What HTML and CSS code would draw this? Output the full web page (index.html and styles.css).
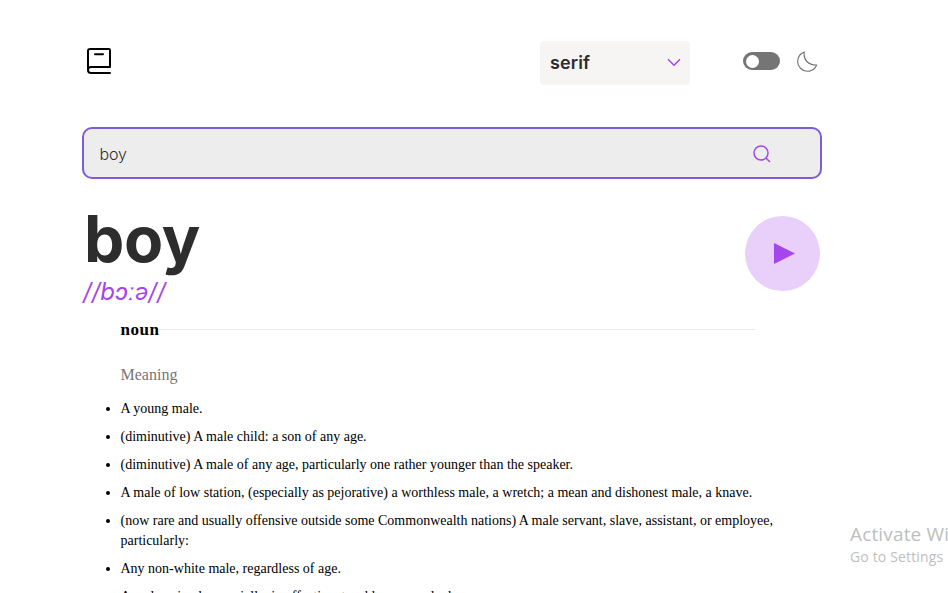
FILE: index.html
```html
<!DOCTYPE html>
<html lang="en">
<head>
<meta charset="utf-8">
<title>Dictionary</title>
<link rel="stylesheet" href="styles.css">
</head>
<body>
<main class="page">
  <header class="topbar">
    <svg class="logo" viewBox="0 0 26 28" fill="none" stroke="#000" stroke-width="2" stroke-linecap="round" stroke-linejoin="round"><path d="M24 20V3Q24 2 23 2H4Q2 2 2 4V23Q2 26 5 26H24M2 23Q2 20 5 20H24M9 7.3H17"/></svg>
    <div class="font-select"><span>serif</span>
      <svg class="chevron" viewBox="0 0 14 9" fill="none" stroke="#a445ed" stroke-width="1.5"><path d="M1 1.3l6 6 6-6"/></svg>
    </div>
    <div class="switch"><span class="knob"></span></div>
    <svg class="moon" viewBox="0 0 22 22" fill="none" stroke="#757575" stroke-width="1.2" stroke-linejoin="round"><path d="M7.6 1.2A10.3 10.3 0 1 0 20.6 14.7C12.3 15 6.5 9.8 7.6 1.2Z"/></svg>
  </header>
  <div class="search"><span>boy</span>
    <svg class="lens" viewBox="0 0 18 18" fill="none" stroke="#a445ed" stroke-width="1.5"><circle cx="8" cy="8" r="7"/><path d="M12.7 12.7L17 17"/></svg>
  </div>
  <section class="entry">
    <div>
      <h1 class="word">boy</h1>
      <p class="phonetic">//bɔːə//</p>
    </div>
    <div class="play"><svg class="triangle" viewBox="0 0 21 21"><path d="M0 0L21 10.5 0 21Z" fill="#a445ed"/></svg></div>
  </section>
  <section class="definitions">
    <div class="part"><h2>noun</h2><span class="rule"></span></div>
    <h3 class="subtitle">Meaning</h3>
    <ul class="meanings">
      <li>A young male.</li>
      <li>(diminutive) A male child: a son of any age.</li>
      <li>(diminutive) A male of any age, particularly one rather younger than the speaker.</li>
      <li>A male of low station, (especially as pejorative) a worthless male, a wretch; a mean and dishonest male, a knave.</li>
      <li>(now rare and usually offensive outside some Commonwealth nations) A male servant, slave, assistant, or employee, particularly:</li>
      <li>Any non-white male, regardless of age.</li>
      <li>A male animal, especially, in affectionate address, a male dog.</li>
    </ul>
  </section>
</main>
<aside class="watermark"><p class="watermark-title">Activate Wi</p><p>Go to Settings</p></aside>
</body>
</html>
```
FILE: styles.css
```css
* { box-sizing: border-box; }
body { margin: 0; height: 593px; overflow: hidden; background: #fff; color: #000; font-family: "Liberation Serif", serif; }
h1, h2, h3, p, ul { margin: 0; padding: 0; }
svg { display: block; flex: none; }
.page { width: 740px; margin: 0 0 0 82px; padding-top: 41px; }
.topbar { display: flex; align-items: center; height: 44px; }
.logo { width: 26px; height: 28px; margin-left: 4px; margin-top: -4px; }
.font-select { display: flex; align-items: center; justify-content: space-between; width: 150px; height: 44px; margin-left: 428px; padding: 0 9px 2px 10px; border-radius: 4px; background: #f6f5f4; color: #2d2d2d; font: 600 18px Inter, sans-serif; letter-spacing: .1px; }
.chevron { width: 14px; height: 9px; }
.switch { width: 37px; height: 18px; margin: -4px 0 0 53px; padding: 2.5px; border-radius: 9px; background: #757575; }
.knob { display: block; width: 13px; height: 13px; border-radius: 50%; background: #fff; }
.moon { width: 21px; height: 21px; margin: -4px 0 0 17px; }
.search { display: flex; align-items: center; justify-content: space-between; height: 52px; margin-top: 42px; padding: 1px 49px 0 15.5px; border: 2px solid #7f5bd5; border-radius: 10px; background: #ededed; color: #2d2d2d; font: 300 16px Inter, sans-serif; }
.search span { letter-spacing: -.2px; }
.lens { width: 18px; height: 18px; }
.entry { display: flex; justify-content: space-between; height: 137px; padding: 22px 2px 0 0; font-family: Inter, sans-serif; }
.word { height: 78px; margin-top: -1px; padding-left: 2px; color: #2d2d2d; font-size: 64px; font-weight: 700; line-height: 78px; letter-spacing: -.3px; }
.phonetic { padding-left: 1px; color: #a445ed; font-size: 24px; font-style: italic; font-weight: 400; line-height: 29px; margin-top: -1px; }
.play { display: flex; align-items: center; justify-content: center; width: 75px; height: 75px; margin-top: 15px; padding-left: 3px; border-radius: 50%; background: #e8d0fa; }
.triangle { width: 21px; height: 21px; }
.definitions { margin-left: 38.5px; padding-top: 4px; }
.part { display: flex; align-items: center; width: 634px; height: 20px; }
.part h2 { font-size: 17px; letter-spacing: .5px; line-height: 20px; }
.rule { flex: 1; height: 1px; margin-top: -1px; background: #e9e9e9; }
.subtitle { margin-top: 25px; color: #757575; font-size: 16px; font-weight: 400; line-height: 20px; }
.meanings { width: 662px; margin-top: 14px; font-size: 14px; line-height: 20px; }
.meanings li { margin-bottom: 8px; }
.watermark { position: absolute; left: 850px; top: 522px; white-space: nowrap; color: #bebebe; font: 14px/20px "Open Sans", sans-serif; letter-spacing: .15px; }
.watermark-title { font-size: 19px; line-height: 25px; }
```
